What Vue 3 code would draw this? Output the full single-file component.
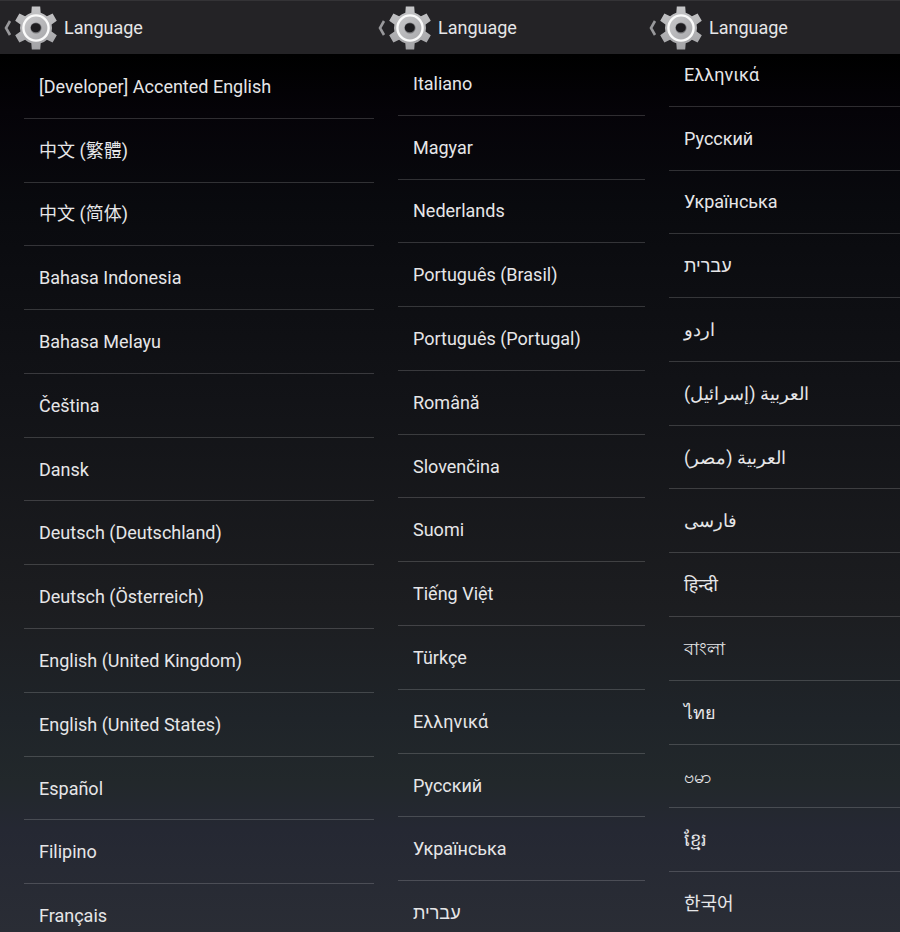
<template>
  <main class="screens">
    <section v-for="screen in screens" :key="screen.id" class="screen">
      <header class="action-bar">
        <button class="up-btn" type="button" aria-label="Back">
          <svg class="chevron" viewBox="0 0 8 16" aria-hidden="true">
            <path d="M6 1 L2 8 L6 15" fill="none" stroke="#98989b" stroke-width="2.6" />
          </svg>
          <svg class="gear" viewBox="0 0 44 44" aria-hidden="true">
            <defs>
              <linearGradient :id="`metal-${screen.id}`" x1="0" y1="0" x2="0" y2="44" gradientUnits="userSpaceOnUse">
                <stop offset="0" stop-color="#c6c6c8" />
                <stop offset="1" stop-color="#a2a2a5" />
              </linearGradient>
              <linearGradient :id="`hub-${screen.id}`" x1="0" y1="0" x2="1" y2="1">
                <stop offset="0" stop-color="#c8c8ca" />
                <stop offset="1" stop-color="#a8a8ab" />
              </linearGradient>
            </defs>
            <path :d="gearPath" :fill="`url(#metal-${screen.id})`" />
            <circle cx="22" cy="22" r="12.6" :fill="`url(#hub-${screen.id})`" stroke="#fafafa" stroke-width="2.4" />
            <circle cx="22" cy="22" r="5.6" fill="#77777a" />
            <ellipse cx="21.8" cy="21.8" rx="5" ry="4.5" fill="#1d1c1f" />
          </svg>
        </button>
        <h1 class="title">Language</h1>
      </header>

      <ul class="languages" :style="listOffset(screen.scroll)">
        <li v-for="name in screen.languages" :key="name" class="language">
          <button class="language-btn" type="button">{{ name }}</button>
        </li>
      </ul>
    </section>
  </main>
</template>

<script setup>
// How far the list runs past the bottom of the screen
const OVERSCROLL = 16

const screens = [
  {
    id: 'first',
    scroll: 0,
    languages: [
      '[Developer] Accented English',
      '中文 (繁體)',
      '中文 (简体)',
      'Bahasa Indonesia',
      'Bahasa Melayu',
      'Čeština',
      'Dansk',
      'Deutsch (Deutschland)',
      'Deutsch (Österreich)',
      'English (United Kingdom)',
      'English (United States)',
      'Español',
      'Filipino',
      'Français'
    ]
  },
  {
    id: 'second',
    scroll: 3,
    languages: [
      'Italiano',
      'Magyar',
      'Nederlands',
      'Português (Brasil)',
      'Português (Portugal)',
      'Română',
      'Slovenčina',
      'Suomi',
      'Tiếng Việt',
      'Türkçe',
      'Ελληνικά',
      'Русский',
      'Українська',
      'עברית'
    ]
  },
  {
    id: 'third',
    scroll: 12,
    languages: [
      'Ελληνικά',
      'Русский',
      'Українська',
      'עברית',
      'اردو',
      'العربية (إسرائيل)',
      'العربية (مصر)',
      'فارسی',
      'हिन्दी',
      'বাংলা',
      'ไทย',
      'ဗမာ',
      'ខ្មែរ',
      '한국어'
    ]
  }
]

const listOffset = (scroll) => ({
  marginTop: `${-scroll}px`,
  marginBottom: `${scroll - OVERSCROLL}px`
})

// Six teeth, each one narrowing a little towards its tip
const point = (radius, degrees) => {
  const a = (degrees * Math.PI) / 180
  return `${(22 + radius * Math.sin(a)).toFixed(2)} ${(22 - radius * Math.cos(a)).toFixed(2)}`
}

const gearPath = [0, 60, 120, 180, 240, 300]
  .map((t, i) =>
    `${i ? 'L' : 'M'}${point(16, t - 17)} L${point(22, t - 11)} L${point(22, t + 11)} L${point(16, t + 17)} A16 16 0 0 1 ${point(16, t + 43)}`
  )
  .join(' ') + ' Z'
</script>

<style>
body {
  background-color: #000;
}
</style>

<style scoped>
.screens {
  display: grid;
  grid-template-columns: 374fr 271fr 255fr;
  height: 100vh;
  overflow: hidden;
  font-family: Roboto, "Noto Sans", "Noto Sans CJK SC", "Noto Sans CJK KR", sans-serif;
  color: #e6e6e8;
  background: linear-gradient(
    #000 6%,
    #050308 12%,
    #090a0e 22%,
    #121317 43%,
    #1c1d20 65%,
    #1f2429 77%,
    #22282b 84%,
    #252833 89%,
    #2a2d35 100%
  );
}

.screen {
  display: flex;
  flex-direction: column;
  min-width: 0;
  min-height: 0;
}

.action-bar {
  display: flex;
  align-items: center;
  flex-shrink: 0;
  height: 54px;
  box-sizing: border-box;
  border-top: 1px solid #343336;
  background-color: #242326;
  z-index: 1;
}

.up-btn {
  display: flex;
  align-items: center;
  gap: 2px;
  padding: 0 0 0 4px;
  border: none;
  background: none;
  cursor: pointer;
}

.chevron {
  width: 8px;
  height: 16px;
}

.gear {
  width: 44px;
  height: 44px;
}

.title {
  margin: 0 0 0 6px;
  font-size: 18px;
  font-weight: 400;
  line-height: 24px;
}

.languages {
  display: grid;
  grid-auto-rows: minmax(40px, 1fr);
  flex: 1;
  padding: 1px 0 0 24px;
  list-style: none;
}

.language {
  display: flex;
  border-bottom: 1px solid rgba(255, 255, 255, 0.17);
}

.language-btn {
  flex: 1;
  padding: 1px 15px 0;
  border: none;
  background: none;
  color: inherit;
  font-family: inherit;
  font-size: 18px;
  line-height: 24px;
  text-align: left;
  white-space: nowrap;
  cursor: pointer;
}
</style>
